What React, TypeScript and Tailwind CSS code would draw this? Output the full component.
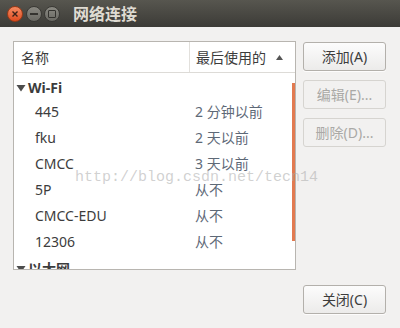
import React from "react";

type Conn = { name: string; used: string };

const wifi: Conn[] = [
  { name: "445", used: "2 分钟以前" },
  { name: "fku", used: "2 天以前" },
  { name: "CMCC", used: "3 天以前" },
  { name: "5P", used: "从不" },
  { name: "CMCC-EDU", used: "从不" },
  { name: "12306", used: "从不" },
];

const font = { fontFamily: '"Noto Sans", "Noto Sans CJK SC", sans-serif' };

function Triangle() {
  return (
    <svg width="10" height="8" viewBox="0 0 10 8" className="ml-[2px] mr-[2px]">
      <path d="M0.5 1 L9.5 1 L5 7.5 Z" fill="#4c4c4c" />
    </svg>
  );
}

function Button({ label, disabled }: { label: string; disabled?: boolean }) {
  return (
    <button
      type="button"
      className={
        disabled
          ? "h-[29px] w-[83px] rounded-[3px] border border-[#d6d4d0] bg-[#f2f1f0] text-[14px] text-[#aaa9a6]"
          : "h-[29px] w-[83px] rounded-[3px] border border-[#b3b0ab] bg-gradient-to-b from-[#fcfcfc] to-[#ecebea] text-[14px] text-[#3c3c3c] shadow-[0_1px_0_rgba(255,255,255,0.8)]"
      }
    >
      {label}
    </button>
  );
}

export default function App() {
  return (
    <div
      className="relative flex h-[328px] w-[400px] flex-col overflow-hidden bg-[#f2f1f0]"
      style={font}
    >
      {/* title bar */}
      <div className="flex h-[27px] items-center bg-gradient-to-b from-[#57564f] to-[#3c3b37] pl-[7px]">
        <div className="flex h-[16px] w-[16px] items-center justify-center rounded-full border border-[#9b3a17] bg-gradient-to-b from-[#f58a60] to-[#df4a1c]">
          <svg width="8" height="8" viewBox="0 0 8 8">
            <path d="M1.5 1.5 L6.5 6.5 M6.5 1.5 L1.5 6.5" stroke="#3a2118" strokeWidth="1.4" />
          </svg>
        </div>
        <div className="ml-[3px] flex h-[16px] w-[16px] items-center justify-center rounded-full border border-[#3a3935] bg-gradient-to-b from-[#8a8982] to-[#6a6963]">
          <div className="h-[2px] w-[8px] bg-[#34332f]" />
        </div>
        <div className="ml-[2px] flex h-[16px] w-[16px] items-center justify-center rounded-full border border-[#3a3935] bg-gradient-to-b from-[#8a8982] to-[#6a6963]">
          <div className="h-[8px] w-[8px] rounded-[1px] border-[1.5px] border-[#34332f]" />
        </div>
        <span className="ml-[13px] text-[16px] font-bold leading-none text-[#dfdbd2]">
          网络连接
        </span>
      </div>

      {/* body */}
      <div className="flex pl-[13px] pt-[14px]">
        <div className="relative h-[229px] w-[283px] overflow-hidden border border-[#b8b5b0] bg-white">
          <div className="flex h-[31px] items-center border-b border-[#dddbd7] text-[14px] text-[#3c3c3c]">
            <div className="flex h-full w-[176px] items-center border-r border-[#e2e0dc] pl-[7px]">
              名称
            </div>
            <div className="flex items-center pl-[6px]">
              最后使用的
              <svg width="7" height="5" viewBox="0 0 7 5" className="ml-[10px]">
                <path d="M0 5 L3.5 0 L7 5 Z" fill="#555" />
              </svg>
            </div>
          </div>

          <div className="flex h-[25px] items-center pt-[4px] text-[14px] font-bold text-[#3c3c3c]">
            <Triangle />
            Wi-Fi
          </div>
          {wifi.map((c) => (
            <div key={c.name} className="flex h-[26px] items-center text-[14px]">
              <span className="w-[181px] pl-[21px] text-[#3c3c3c]">{c.name}</span>
              <span className="text-[#5e6977]">{c.used}</span>
            </div>
          ))}
          <div className="flex h-[25px] items-center pt-[4px] text-[14px] font-bold text-[#3c3c3c]">
            <Triangle />
            以太网
          </div>

          <div className="absolute right-0 top-[41px] h-[158px] w-[3px] bg-[#e27a50]" />
        </div>

        <div className="ml-[7px] flex flex-col gap-[9px] pt-[1px]">
          <Button label="添加(A)" />
          <Button label="编辑(E)..." disabled />
          <Button label="删除(D)..." disabled />
        </div>
      </div>

      <div className="flex justify-end pr-[14px] pt-[15px]">
        <Button label="关闭(C)" />
      </div>

      {/* watermark */}
      <div
        className="pointer-events-none absolute left-[75px] top-[170px] whitespace-nowrap text-[15px] leading-[15px] text-[rgba(170,170,170,0.55)]"
        style={{ fontFamily: '"Liberation Mono", monospace' }}
      >
        http://blog.csdn.net/tecn14
      </div>
    </div>
  );
}
